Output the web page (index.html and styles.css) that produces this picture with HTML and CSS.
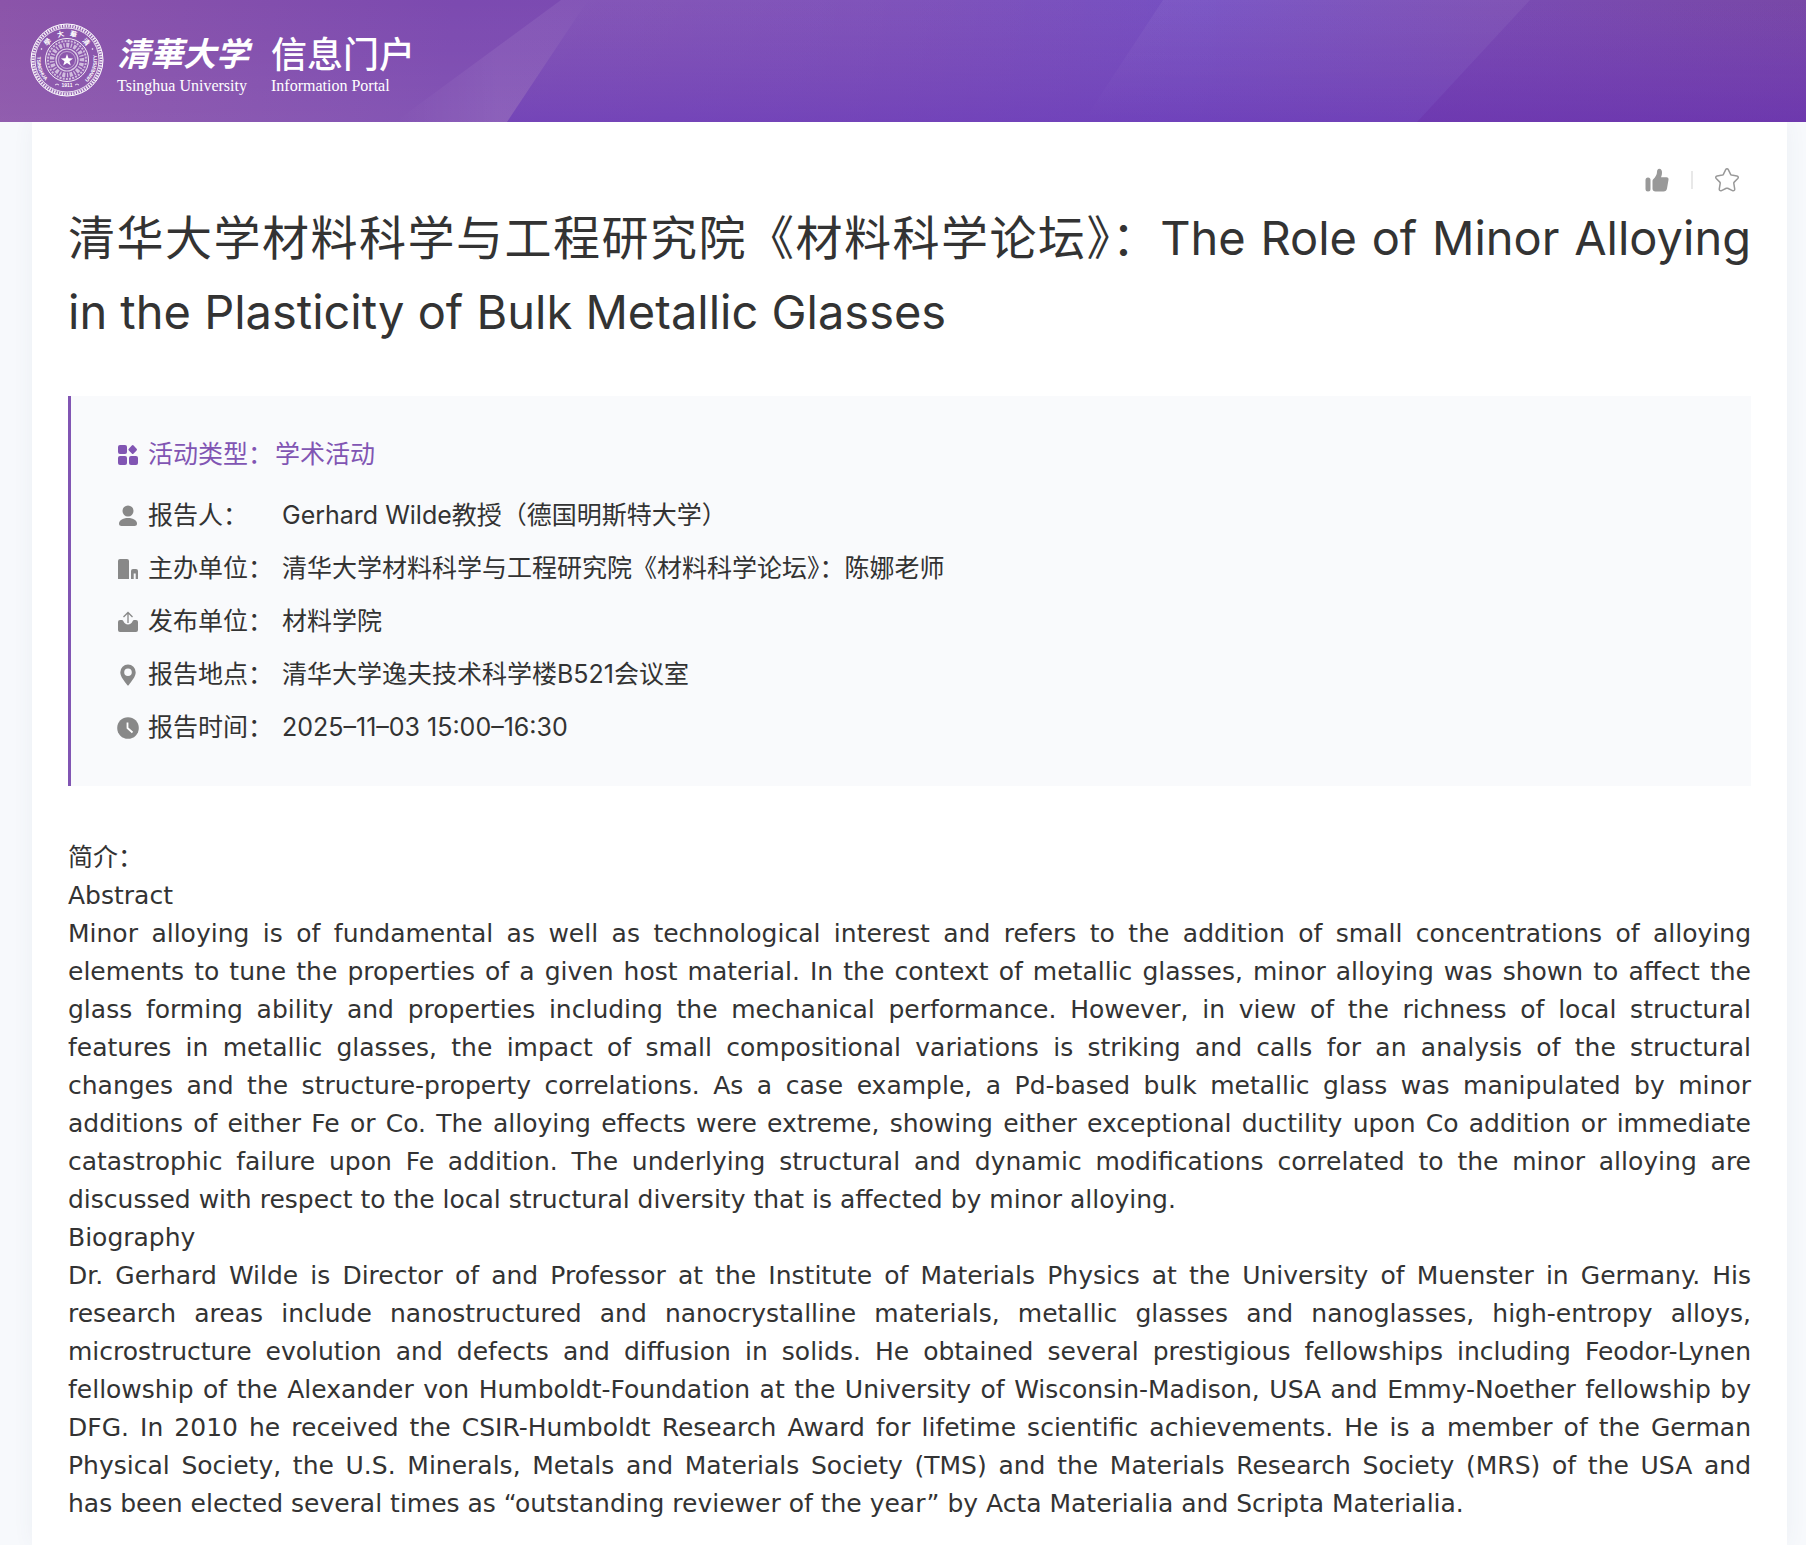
FILE: index.html
```html
<!DOCTYPE html>
<html lang="zh-CN">
<head>
<meta charset="utf-8">
<meta name="viewport" content="width=device-width, initial-scale=1">
<title>清华大学信息门户</title>
<link rel="stylesheet" href="styles.css">
</head>
<body>
<header class="header">
  <svg class="header-bg" viewBox="0 0 1806 122" preserveAspectRatio="none" aria-hidden="true">
    <defs>
      <linearGradient id="wedge" x1="0" y1="0" x2="1" y2="0"><stop offset="0" stop-color="#fff" stop-opacity="0"/><stop offset=".12" stop-color="#fff" stop-opacity=".07"/><stop offset=".5" stop-color="#fff" stop-opacity=".05"/><stop offset="1" stop-color="#fff" stop-opacity="0"/></linearGradient>
      <linearGradient id="fold" x1="0" y1="0" x2="0" y2="1"><stop offset="0" stop-color="#6a35ae" stop-opacity="0"/><stop offset="1" stop-color="#6836b6" stop-opacity=".65"/></linearGradient>
      <linearGradient id="sheet" x1="0" y1="0" x2="0" y2="1"><stop offset="0" stop-color="#fff" stop-opacity=".05"/><stop offset="1" stop-color="#fff" stop-opacity="0"/></linearGradient>
      <linearGradient id="edge" x1="0" y1="0" x2="0" y2="1"><stop offset="0" stop-color="#7438b0" stop-opacity="0"/><stop offset="1" stop-color="#6a2fa8" stop-opacity=".45"/></linearGradient>
    </defs>
    <path d="M561 0H1240L1200 122H395Z" fill="url(#wedge)"/>
    <path d="M588 0H1806V122H507Z" fill="url(#fold)"/>
    <path d="M1163 0H1530L1417 122H1083Z" fill="url(#sheet)"/>
    <path d="M1530 0H1806V122H1417Z" fill="url(#edge)"/>
  </svg>
  <a class="brand" href="#">
    <svg class="seal" viewBox="0 0 74 74" aria-hidden="true">
      <defs>
        <path id="arc-top" d="M13 37a24 24 0 0 1 48 0"/>
        <path id="arc-left" d="M7.800 30A30 30 0 0 0 18 60.200"/>
        <path id="arc-right" d="M56 60.200A30 30 0 0 0 66.200 30"/>
      </defs>
      <g fill="none" stroke="#fff">
        <circle cx="37" cy="37" r="36"/>
        <circle cx="37" cy="37" r="34" stroke-width="3" stroke-dasharray="1.600 1" opacity=".85"/>
        <circle cx="37" cy="37" r="32" stroke-width=".8"/>
        <circle cx="37" cy="37" r="21.500" stroke-width="1" opacity=".9"/>
        <circle cx="37" cy="37" r="19" stroke-width="2" stroke-dasharray="2 1.200" opacity=".6"/>
        <circle cx="37" cy="37" r="15" stroke-width="4.500" stroke-dasharray="1.300 1.600 3 1.500" opacity=".6"/>
        <circle cx="37" cy="37" r="11" stroke-width="1.200" opacity=".7"/>
        <circle cx="37" cy="37" r="8.500" stroke-width=".8" opacity=".6"/>
        <path d="M25 62q2-2 4 0M45 62q2-2 4 0" stroke-width=".8"/>
      </g>
      <path d="M37 31l1.500 4.300 4.600.1-3.600 2.800 1.300 4.400-3.800-2.600-3.800 2.600 1.300-4.400-3.600-2.800 4.600-.1z" fill="#fff"/>
      <circle cx="11.500" cy="26" r=".8" fill="#fff"/><circle cx="62.500" cy="26" r=".8" fill="#fff"/>
      <g class="seal-text">
        <text class="seal-cn"><textPath href="#arc-top" startOffset="24%">學</textPath></text>
        <text class="seal-cn"><textPath href="#arc-top" startOffset="42%">大</textPath></text>
        <text class="seal-cn"><textPath href="#arc-top" startOffset="58%">華</textPath></text>
        <text class="seal-cn"><textPath href="#arc-top" startOffset="76%">清</textPath></text>
        <text class="seal-en"><textPath href="#arc-left" startOffset="50%">TSINGHUA</textPath></text>
        <text class="seal-en"><textPath href="#arc-right" startOffset="50%">UNIVERSITY</textPath></text>
        <text class="seal-en" x="37" y="64">1911</text>
      </g>
    </svg>
    <span class="word">
      <span class="word-hand">清華大学</span>
      <span class="word-en">Tsinghua University</span>
    </span>
    <span class="word">
      <span class="word-cn">信息门户</span>
      <span class="word-en">Information Portal</span>
    </span>
  </a>
</header>

<main class="card">
  <div class="actions">
    <button class="action" type="button" aria-label="点赞">
      <svg viewBox="0 0 24 24" fill="#999"><rect x="0.500" y="9.500" width="5" height="14" rx="2.500"/><path d="M8 11.500C10.500 9 12 6.500 12 4 12 2 12.800.7 14.200.7 16.300.7 17 2.500 17 4.500 17 6.500 16.500 8 16 9.300H21.500C23 9.300 23.800 10.300 23.500 11.800L22 20.500C21.700 22.500 20.500 23.500 18.500 23.500H10.500C8.800 23.500 7.500 22.500 7.500 20.800V13C7.500 12.400 7.600 11.900 8 11.500Z"/></svg>
    </button>
    <span class="divider"></span>
    <button class="action" type="button" aria-label="收藏">
      <svg viewBox="0 0 24 24" fill="none" stroke="#999" stroke-width="1.500" stroke-linejoin="round"><path d="M10.700 1.700C11.300.5 12.700.5 13.300 1.700L15.500 6.200C15.700 6.700 16.100 7 16.600 7.100L21.900 7.900C23.300 8.100 23.700 9.500 22.800 10.500L19.200 14.100C18.900 14.400 18.700 14.900 18.800 15.400L19.700 20.900C19.900 22.300 18.800 23.200 17.500 22.600L12.700 20.300C12.200 20.100 11.800 20.100 11.300 20.300L6.500 22.600C5.200 23.200 4.100 22.300 4.300 20.900L5.200 15.400C5.300 14.900 5.100 14.400 4.800 14.100L1.200 10.500C.3 9.500.7 8.100 2.100 7.900L7.400 7.100C7.900 7 8.300 6.700 8.500 6.200Z"/></svg>
    </button>
  </div>

  <h1 class="title">清华大学材料科学与工程研究院《材料科学论坛》：The Role of Minor Alloying in the Plasticity of Bulk Metallic Glasses</h1>

  <dl class="info">
    <div class="row row-type">
      <dt><svg class="icon" viewBox="0 0 22 22" fill="#8155b3"><rect x="1" y="1" width="9" height="9" rx="2"/><path d="M14.800 1.600a1.200 1.200 0 0 1 1.800 0l3 3.100a1.200 1.200 0 0 1 0 1.700l-3 3.100a1.200 1.200 0 0 1-1.800 0l-3-3.100a1.200 1.200 0 0 1 0-1.700z"/><rect x="1" y="12" width="9" height="9" rx="2"/><rect x="12" y="12" width="9" height="9" rx="2"/></svg>活动类型：</dt>
      <dd>学术活动</dd>
    </div>
    <div class="row">
      <dt><svg class="icon" viewBox="0 0 22 22" fill="#888"><circle cx="11" cy="6" r="5.500"/><path d="M2 18.500C2 15.500 5.500 13 11 13s9 2.500 9 5.500c0 1.800-1 2.500-2.500 2.500h-13C3 21 2 20.300 2 18.500z"/></svg>报告人：</dt>
      <dd>Gerhard Wilde教授（德国明斯特大学）</dd>
    </div>
    <div class="row">
      <dt><svg class="icon" viewBox="0 0 22 22" fill="#888"><path d="M1 21V3a2 2 0 0 1 2-2h7a2 2 0 0 1 2 2v18zM14 21v-8a2 2 0 0 1 2-2h3a2 2 0 0 1 2 2v8h-2.300v-5.500h-2V21z"/></svg>主办单位：</dt>
      <dd>清华大学材料科学与工程研究院《材料科学论坛》：陈娜老师</dd>
    </div>
    <div class="row">
      <dt><svg class="icon" viewBox="0 0 22 22" fill="#888"><path d="M3 9h1.800c.7 0 1.200.4 1.500 1C7.200 12.300 8.800 13.500 11 13.500s3.800-1.200 4.700-3.500c.3-.6.800-1 1.500-1H19a2 2 0 0 1 2 2v8a2 2 0 0 1-2 2H3a2 2 0 0 1-2-2v-8a2 2 0 0 1 2-2z"/><path d="M11 12V1.500M6.500 6L11 1.500 15.500 6" fill="none" stroke="#888" stroke-width="1.300"/></svg>发布单位：</dt>
      <dd>材料学院</dd>
    </div>
    <div class="row">
      <dt><svg class="icon" viewBox="0 0 22 22" fill="#888" fill-rule="evenodd"><path d="M11 .5a7.700 7.700 0 0 0-7.700 7.700c0 4.600 4 8.500 6.900 12.800a1 1 0 0 0 1.600 0c2.900-4.300 6.900-8.200 6.900-12.800A7.700 7.700 0 0 0 11 .5zm0 4a3.800 3.800 0 1 1 0 7.600 3.800 3.800 0 0 1 0-7.600z"/></svg>报告地点：</dt>
      <dd>清华大学逸夫技术科学楼B521会议室</dd>
    </div>
    <div class="row">
      <dt><svg class="icon" viewBox="0 0 22 22"><circle cx="11" cy="11" r="10.800" fill="#888"/><path d="M10.500 5.500V11l5 4.500" fill="none" stroke="#fff" stroke-width="1.800"/></svg>报告时间：</dt>
      <dd>2025–11–03 15:00–16:30</dd>
    </div>
  </dl>

  <article class="body">
    <p>简介：</p>
    <p>Abstract</p>
    <p>Minor alloying is of fundamental as well as technological interest and refers to the addition of small concentrations of alloying elements to tune the properties of a given host material. In the context of metallic glasses, minor alloying was shown to affect the glass forming ability and properties including the mechanical performance. However, in view of the richness of local structural features in metallic glasses, the impact of small compositional variations is striking and calls for an analysis of the structural changes&nbsp;and the structure-property correlations. As a case example, a Pd-based bulk metallic glass was manipulated by minor additions of either Fe or Co. The alloying effects were extreme, showing either exceptional ductility upon Co addition or immediate catastrophic failure upon Fe addition. The underlying structural and dynamic modifications correlated to the minor alloying are discussed with respect to the local structural diversity that is affected by minor alloying.</p>
    <p>Biography</p>
    <p>Dr. Gerhard Wilde is Director of and Professor at the Institute of Materials Physics at the University of Muenster in Germany. His research areas include nanostructured and nanocrystalline materials, metallic glasses and nanoglasses, high-entropy alloys, microstructure evolution and defects and diffusion in solids. He obtained several prestigious fellowships including Feodor-Lynen fellowship of the Alexander von Humboldt-Foundation at the University of Wisconsin-Madison, USA and Emmy-Noether fellowship by DFG. In 2010 he received the CSIR-Humboldt Research Award for lifetime scientific achievements. He is a member of the German Physical Society, the U.S. Minerals, Metals and Materials Society (TMS) and the Materials Research Society (MRS) of the USA and has&nbsp;been elected several times as “outstanding reviewer of the year” by Acta Materialia and Scripta Materialia.</p>
  </article>
</main>
</body>
</html>
```
FILE: styles.css
```css
* { box-sizing: border-box; }

body {
  margin: 0;
  background: #f7f9fc;
  color: #333;
  font-family: Inter, "Noto Sans CJK SC", sans-serif;
  font-size: 25px;
}

.header {
  position: relative;
  display: flex;
  height: 122px;
  padding: 23px 30px 0;
  background:
    linear-gradient(to bottom, rgba(255, 255, 255, 0), rgba(255, 255, 255, .06)),
    linear-gradient(98deg, #8b54a9 0%, #7c4ab0 25%, #7a4cb8 50%, #754fc2 66%, #7a4cb3 82%, #7848a6 100%);
}

.header-bg {
  position: absolute;
  inset: 0;
  width: 100%;
  height: 100%;
}

.brand {
  position: relative;
  display: flex;
  align-items: flex-start;
  color: #fff;
  text-decoration: none;
}

.seal {
  width: 74px;
  height: 74px;
  margin-right: 13px;
}

.seal-text {
  fill: #fff;
  text-anchor: middle;
}

.seal-en { font: bold 5px "Liberation Sans", sans-serif; }

.seal-cn { font: bold 7px "Noto Sans CJK TC", sans-serif; }

.word {
  display: flex;
  flex-direction: column;
  margin-right: 22px;
  white-space: nowrap;
}

.word-hand,
.word-cn {
  height: 54px;
  line-height: 58px;
}

.word-hand {
  font-family: "Noto Sans CJK TC", sans-serif;
  font-size: 33px;
  font-style: italic;
  font-weight: 700;
}

.word-cn {
  font-family: "Noto Sans CJK SC", sans-serif;
  font-size: 36px;
  font-weight: 500;
}

.word-en {
  font: 16px/18px "Liberation Serif", serif;
}

.card {
  margin: 0 19px 0 32px;
  padding: 44px 36px 22px;
  background: #fff;
  box-shadow: 0 0 20px rgba(60, 80, 120, .06);
  clip-path: inset(0 -30px);
}

.actions {
  display: flex;
  align-items: center;
  justify-content: flex-end;
  gap: 22px;
  height: 28px;
  padding-right: 12px;
}

.action {
  width: 24px;
  height: 24px;
  padding: 0;
  border: 0;
  background: none;
}

.action svg {
  display: block;
  width: 24px;
  height: 24px;
}

.divider {
  width: 2px;
  height: 18px;
  background: #e8e8e8;
}

.title {
  margin: 7px 0 47px;
  font-size: 47px;
  font-weight: 400;
  line-height: 74px;
  text-align: justify;
}

.info {
  margin: 0 0 53px;
  padding: 32px 46px;
  border-left: 3px solid #8155b3;
  background: #f9fafc;
}

.row {
  display: flex;
  height: 53px;
  line-height: 53px;
}

.row-type {
  height: 61px;
  color: #8155b3;
}

.row dt {
  display: flex;
  align-items: center;
  width: 165px;
}

.row-type dt { width: 158px; }

.row dd { margin: 0; }

.row-type dt,
.row-type dd { height: 53px; }

.icon {
  width: 22px;
  height: 22px;
  margin-right: 9px;
}

.body {
  font-family: "DejaVu Sans", "Noto Sans CJK SC", sans-serif;
  line-height: 38px;
  text-align: justify;
}

.body p { margin: 0; }
```
